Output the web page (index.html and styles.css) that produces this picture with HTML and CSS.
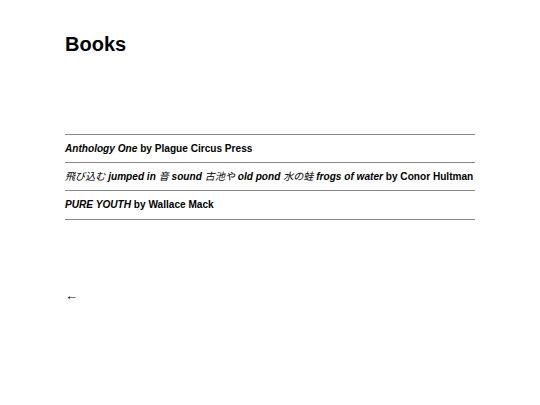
FILE: index.html
```html
<!DOCTYPE html>
<html>
<head>
<meta charset="utf-8">
<link rel="stylesheet" href="styles.css">
</head>
<body>
<main class="page">
  <h1 class="title">Books</h1>
  <ul class="books">
    <li class="book"><em>Anthology One</em> by Plague Circus Press</li>
    <li class="book"><em><span class="cjk">飛び込む</span> jumped in <span class="cjk">音</span> sound <span class="cjk">古池や</span> old pond <span class="cjk">水の蛙</span> frogs of water</em> by Conor Hultman</li>
    <li class="book"><em>PURE YOUTH</em> by Wallace Mack</li>
  </ul>
  <a class="back">←</a>
</main>
</body>
</html>
```
FILE: styles.css
```css
html, body {
  margin: 0;
  padding: 0;
  background: #fff;
}
.page {
  width: 410px;
  margin: 0 auto;
  font-family: "Liberation Sans", Arial, "Noto Sans CJK JP", sans-serif;
  color: #000;
}
.title {
  font-size: 20px;
  font-weight: bold;
  margin: 0;
  padding-top: 33px;
  line-height: 23px;
}
.books {
  list-style: none;
  margin: 78px 0 0;
  padding: 0;
  border-bottom: 1px solid #888;
}
.book {
  border-top: 1px solid #888;
  font-size: 10.1px;
  font-weight: bold;
  line-height: 13px;
  padding: 7px 0 7px;
  white-space: nowrap;
}
.book:last-child {
  padding-bottom: 8px;
}
.book em {
  font-style: italic;
}
.cjk {
  font-weight: normal;
}
.back {
  display: block;
  margin-top: 68px;
  font-size: 13px;
  color: #000;
}
```
